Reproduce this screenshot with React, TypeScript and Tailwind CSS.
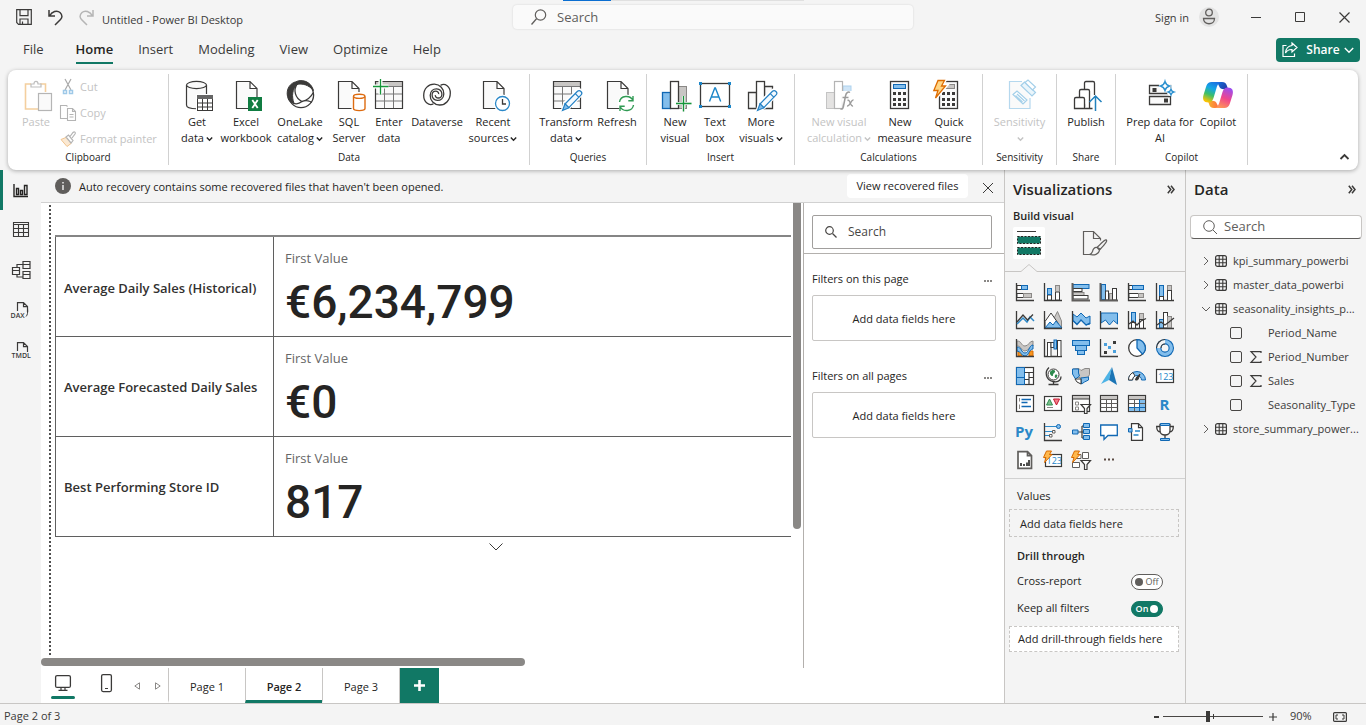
import React from "react";
import type { ReactNode } from "react";

const INK = "#3b3a39";
const BLUE = "#1068b4";
const SKY = "#83beec";
const GREY = "#c8c6c4";

/* ---------- shared pieces ---------- */

type SvgProps = { w?: number; h?: number; children?: ReactNode; className?: string };

function Svg({ w = 32, h = w, children, className = "" }: SvgProps) {
  return (
    <svg
      width={w}
      height={h}
      viewBox={`0 0 ${w} ${h}`}
      fill="none"
      stroke={INK}
      className={`shrink-0 overflow-visible ${className}`}
      aria-hidden="true"
    >
      {children}
    </svg>
  );
}

function Caret() {
  return (
    <svg width="7" height="6" viewBox="0 0 7 6" fill="none" stroke="currentColor" strokeWidth="1.4" className="ml-0.5 inline-block" aria-hidden="true">
      <path d="M.8 1.500 3.500 4.200 6.200 1.500" />
    </svg>
  );
}

/* ---------- ribbon icons (32 x 32) ---------- */

const page = (x: number) => (
  <path d={`M${x} 1.5h13.5l7 7v20H${x}z M${x + 13.5} 1.5v7h7`} fill="#fafafa" strokeWidth="1.2" />
);

const pencil = (
  <g stroke="#2380c4" strokeWidth="1.2">
    <path d="M12.5 30.5 15 23 27.5 10.8c2.2-2 5.8 1.2 3.8 3.6L19 27.5z" fill="#fff" stroke="#fff" strokeWidth="3.5" />
    <path d="M15 24 27.5 11.3c2.2-2 5.8 1.2 3.6 3.6L18.8 27.6z" fill="#f4faff" />
    <path d="M12.5 30.5 15 23.8l3.9 3.9z" fill={SKY} />
    <path d="m25.3 13.6 3.7 3.8" />
  </g>
);

const calculator = (screen: string, edge: string) => (
  <g>
    <rect x="6.5" y="1.5" width="18" height="27" fill="#fafafa" strokeWidth="1.3" />
    <rect x="9.5" y="4.5" width="12" height="4" fill={screen} stroke={edge} />
    {[12, 18, 23].map((y) =>
      [9, 14, 19].map((x) => <rect key={`${x}-${y}`} x={x} y={y} width="3" height="3" fill={INK} stroke="none" />),
    )}
  </g>
);

const bolt = "M5 .5h6.5L8.5 6h4L2.5 18 5 10.5H.8z";

const IconPaste = () => (
  <Svg>
    <path d="M11 4H5.5v25H18 M20 4h5.5v8" stroke="#f4cf9f" strokeWidth="1.6" />
    <path d="M11 7V4h3c0-3.6 4-3.6 4 0h3v3z" stroke="#bdbdbd" fill="#fff" strokeWidth="1.2" />
    <rect x="18.5" y="13.5" width="13" height="17" stroke="#b5b5b5" fill="#fafafa" strokeWidth="1.2" />
  </Svg>
);
const IconGet = () => (
  <Svg>
    <path d="M5.5 5v20c0 5 20 5 20 0V5" fill="#fafafa" strokeWidth="1.2" />
    <ellipse cx="15.5" cy="5" rx="10" ry="3.6" fill="#fafafa" strokeWidth="1.2" />
    <path d="M15 14h18v18H15z" fill="#fff" stroke="none" />
    <rect x="16.5" y="15.5" width="15" height="15" fill="#fff" />
    <path d="M16 15h16v4H16z" fill="#666" stroke="none" />
    <path d="M16.5 23h15M16.5 27h15M21.5 19v11.5M26.5 19v11.5" />
  </Svg>
);
const IconExcel = () => (
  <Svg>
    {page(6.5)}
    <rect x="18" y="17" width="14" height="14" fill="#107c41" stroke="none" />
    <path d="m22.3 20 5.4 8m0-8-5.4 8" stroke="#fff" strokeWidth="1.8" />
  </Svg>
);
const IconOneLake = () => (
  <Svg>
    <circle cx="17" cy="15" r="12.6" fill="#fff" strokeWidth="1.3" />
    <path d="M11 2C4 4.500 1.500 12 4.300 19c1.800 3.500 3.600 3.800 5.700 4.400C7.500 16.500 8 9 13.500 4z" fill={INK} />
    <path d="M11 2.300C17-1.500 27 1 29.500 10.500 25 5 18 3 13 4.500z" fill={INK} />
    <path d="M13.200 4C9 10 11 18 18 21.500c5-1.200 8.800-4 11.300-9M9 23c3 1.500 6.500.5 9-1.500 4-1.800 9-.5 9.500 1.200" strokeWidth="1.300" />
  </Svg>
);
const IconSql = () => (
  <Svg>
    {page(5.5)}
    <path d="M18.5 12h15v20h-15z" fill="#fff" stroke="none" />
    <path d="M20.5 16.5v12c0 2.8 11.5 2.8 11.5 0v-12" stroke="#dd6b10" fill="#fff" strokeWidth="1.4" />
    <ellipse cx="26.2" cy="16.3" rx="5.7" ry="2.1" stroke="#dd6b10" fill="#fff" strokeWidth="1.4" />
  </Svg>
);
const IconEnter = () => (
  <Svg>
    <rect x="2.5" y="1.5" width="27" height="27" fill="#fafafa" />
    <path d="M3 2h26v4H3z" fill={GREY} stroke="none" />
    <path d="M2.5 6.5h27M2.5 14h27M2.5 21h27M11.5 6.5v22M20.5 6.5v22" stroke="#777" />
    <path d="M2.5 1.5h27v27h-27z" strokeWidth="1.2" />
    <path d="M7.5-1v15.5M0 6.5h15.5" stroke="#fff" strokeWidth="4" />
    <path d="M7.5-1v15.5M0 6.5h15.5" stroke="#16963a" strokeWidth="1.3" />
  </Svg>
);
const IconDataverse = () => (
  <Svg>
    <path d="M12.5 23.8C8 26.5 2.7 22 2.7 15.5 2.7 8.5 7.5 4 13.5 4.2c5.5.2 9.5 4.500 9.300 9.800-.2 4-3 6.500-6.500 6.400-3.200-.1-5.300-2.500-5.200-5.400.1-2.300 1.700-3.800 3.700-3.800 1.600 0 3 1.200 2.900 2.900" strokeWidth="1.3" />
    <path d="M19.500 5.400c4.500-2.700 9.800 1.100 9.800 7.600 0 7-4.800 12.200-10.800 12-5.500-.2-9.500-4.500-9.300-9.800.2-4 3-6.500 6.500-6.400 3.200.1 5.300 2.500 5.200 5.400-.1 2.300-1.700 3.800-3.700 3.800-1.600 0-3-1.200-2.900-2.900" strokeWidth="1.3" />
  </Svg>
);
const IconRecent = () => (
  <Svg>
    {page(6.5)}
    <circle cx="25.5" cy="23.5" r="9" fill="#fff" stroke="none" />
    <circle cx="25.5" cy="23.5" r="7" fill="#fff" stroke="#2b88c8" strokeWidth="1.3" />
    <path d="M25.5 19v5h3.5" strokeWidth="1.3" />
  </Svg>
);
const IconTransform = () => (
  <Svg>
    <rect x="3.5" y="1.5" width="27" height="27" fill="#fafafa" />
    <path d="M4 2h26v4H4z" fill={GREY} stroke="none" />
    <path d="M3.5 6.5h27M3.5 14h27M3.5 21h27M12.5 6.5v22M21.5 6.5v22" stroke="#777" />
    <path d="M3.5 1.5h27v27h-27z" strokeWidth="1.2" />
    {pencil}
  </Svg>
);
const IconRefresh = () => (
  <Svg>
    {page(6.5)}
    <circle cx="25.5" cy="23.5" r="9" fill="#fff" stroke="none" />
    <path d="M18.5 22c1-6.5 10.5-7.5 13.5-1.5m0-4.5v4.7h-4.7M32.5 25c-1 6.5-10.5 7.5-13.5 1.5m0 4.5v-4.7h4.7" stroke="#2f9a53" strokeWidth="1.4" />
  </Svg>
);
const IconNewVisual = () => (
  <Svg>
    <rect x="3.5" y="12.5" width="8" height="16" fill={SKY} stroke={BLUE} strokeWidth="1.3" />
    <rect x="19.5" y="6.5" width="8" height="22" fill={GREY} stroke="#8a8886" />
    <rect x="11.5" y="1.5" width="8" height="27" fill="#fff" strokeWidth="1.3" />
    <path d="M24.500 16v15.500M17 23.5h15.500" stroke="#f4f4f4" strokeWidth="3" />
    <path d="M24.500 16v15.500M17 23.5h15.500" stroke="#16963a" strokeWidth="1.3" />
  </Svg>
);
const IconTextBox = () => (
  <Svg>
    <rect x="1.5" y="3.5" width="29" height="23" fill="#fff" strokeWidth="1.3" />
    <path d="m10.5 21.5 5.300-13.500h.6l5.300 13.500M12.5 17h7.200" stroke="#1b86c9" strokeWidth="1.4" />
    {[0, 29].map((x) => [2, 25].map((y) => <rect key={`${x}${y}`} x={x} y={y} width="3" height="3" fill="#1b86c9" stroke="none" />))}
  </Svg>
);
const IconMoreVisuals = () => (
  <Svg>
    <path d="M3.5 12.5h8v16h-8zM19.5 6.5h8v22h-8z" fill="#fafafa" strokeWidth="1.3" />
    <rect x="11.5" y="1.5" width="8" height="27" fill="#fff" strokeWidth="1.3" />
    {pencil}
  </Svg>
);
const IconVisualCalc = () => (
  <Svg>
    <rect x="3.5" y="12.5" width="8" height="16" fill="#e4e3e2" stroke="#c4c4c4" />
    <rect x="20" y="6" width="8" height="7" fill="#cfe5f7" stroke="#add2ee" />
    <rect x="11.5" y="1.5" width="8" height="27" fill="#fff" stroke="#b4b4b4" strokeWidth="1.2" />
    <path d="M18 11h14v20H20z" fill="#fff" stroke="none" />
    <path d="M27 12.500c-2-1.400-4 .5-4.500 3.500l-2.200 11c-.3 1.800-1.500 2.500-2.800 1.800M19.500 17.500h6" stroke="#9b9b9b" strokeWidth="1.5" />
    <path d="M24.5 20.5c3-1.500 2.500 6.500 5.500 5.500M30.500 20c-2.500-.5-3.500 6.500-6.500 6" stroke="#9b9b9b" strokeWidth="1.4" />
  </Svg>
);
const IconMeasure = () => <Svg>{calculator(SKY, BLUE)}</Svg>;
const IconQuick = () => (
  <Svg>
    {calculator(GREY, "#8a8886")}
    <path d={bolt} fill="#fff" stroke="#fff" strokeWidth="4" />
    <path d={bolt} fill="#ffd686" stroke="#de6c00" strokeWidth="1.3" />
  </Svg>
);
const IconSensitivity = () => (
  <Svg>
    <path d="M18 1.500H5.500v27h20.500V18" fill="#fafafa" stroke="#b5d8ee" strokeWidth="1.2" />
    <g stroke="#a3cfe9" strokeWidth="1.2" fill="#fff">
      <path d="m9 14.500 4-3.500L23 20l-4 4z" />
      <path d="m11.500 15.500 7 6.500m-5.500-8 7.500 7" />
      <path d="m17 5.500 3.500-3.500 4 4 3 2.500 4 4-3.500 3.500z" fill="#eaf5fb" />
      <path d="m21 2.500 3-2.500L31.500 7l-3 3z" />
    </g>
  </Svg>
);
const IconPublish = () => (
  <Svg>
    <path d="M14.5 27V3c0-1 .5-1.500 1.500-1.500h7c1 0 1.500.5 1.500 1.500v12" strokeWidth="1.3" />
    <path d="M9.5 17v-6c0-1 .5-1.500 1.500-1.500h7c1 0 1.500.5 1.500 1.500v17.500" fill="#fff" strokeWidth="1.3" />
    <path d="M4.5 28.5V19c0-1 .5-1.500 1.500-1.500h7c1 0 1.500.5 1.500 1.500v9.500zM14.5 28.5h8" fill="#fff" strokeWidth="1.3" />
    <path d="M25.5 31V17" stroke="#fff" strokeWidth="4" />
    <path d="M25.5 31V16m-6 6 6-6 6 6" stroke="#2181bd" strokeWidth="1.5" />
  </Svg>
);
const IconPrep = () => (
  <Svg>
    <path d="M5.5 5.5h21v8h-21zM5.5 16.5h21v8h-21z" fill="#fafafa" strokeWidth="1.3" />
    <path d="M8.500 8h4v4h-4zM20 18.500h4v4h-4z" fill={INK} stroke="none" />
    <circle cx="21" cy="6" r="6" fill="#fff" stroke="none" />
    <circle cx="27" cy="12" r="4" fill="#fff" stroke="none" />
    <path d="M21 1.500c.8 2.900 1.700 3.700 4.500 4.500-2.800.8-3.700 1.700-4.500 4.500-.8-2.800-1.700-3.700-4.500-4.500 2.800-.8 3.700-1.600 4.500-4.500zM27 9.300c.5 1.800 1 2.200 2.700 2.700-1.700.5-2.200 1-2.700 2.700-.5-1.700-1-2.200-2.700-2.700 1.700-.5 2.200-.9 2.700-2.700z" stroke="#2b90cf" fill="#fff" strokeWidth="1.4" />
  </Svg>
);
const IconCopilot = () => (
  <Svg>
    <defs>
      <linearGradient id="cp-left" x1="0.7" y1="0" x2="0.3" y2="1">
        <stop offset="0" stopColor="#1b6fe0" />
        <stop offset="0.35" stopColor="#14a6e6" />
        <stop offset="0.65" stopColor="#3cbf6a" />
        <stop offset="1" stopColor="#ffc400" />
      </linearGradient>
      <linearGradient id="cp-right" x1="0.7" y1="0" x2="0.3" y2="1">
        <stop offset="0" stopColor="#9b4df0" />
        <stop offset="0.5" stopColor="#f0468c" />
        <stop offset="1" stopColor="#ff9a55" />
      </linearGradient>
      <linearGradient id="cp-top" x1="0" y1="0" x2="1" y2="0.5">
        <stop offset="0" stopColor="#1270dd" />
        <stop offset="1" stopColor="#2140a8" />
      </linearGradient>
      <linearGradient id="cp-bottom" x1="0" y1="0.5" x2="1" y2="0.5">
        <stop offset="0" stopColor="#f7b32b" />
        <stop offset="1" stopColor="#ff6a45" />
      </linearGradient>
    </defs>
    <g stroke="none">
      <path d="M15 2h5c3 0 4.200 1.400 5 4l1 3.200h-4c-3 0-4-.8-5-3.200z" fill="url(#cp-top)" />
      <path d="M17 28h-5c-3 0-4.200-1.400-5-4l-1-3.200h4c3 0 4 .8 5 3.200z" fill="url(#cp-bottom)" />
      <path d="M9.5 2H20c-3.200 0-4.500 2.700-5.500 6l-3 10c-1 3-2.500 4.500-5 4.500-5 0-6.200-3-5-7.500L4.300 6C5.200 3.300 7 2 9.500 2z" fill="url(#cp-left)" />
      <path d="M22.5 28H12c3.200 0 4.500-2.700 5.500-6l3-10c1-3 2.500-4.500 5-4.500 5 0 6.200 3 5 7.500L27.700 24c-.9 2.700-2.700 4-5.200 4z" fill="url(#cp-right)" />
    </g>
  </Svg>
);

/* ---------- ribbon ---------- */

type ToolProps = { icon: ReactNode; lines: string[]; width: string; caret?: boolean; off?: boolean };

function Tool({ icon, lines, width, caret, off }: ToolProps) {
  const last = lines.length - 1;
  return (
    <button type="button" disabled={off} className={`flex shrink-0 flex-col items-center gap-0.5 pt-1.5 text-[11px] leading-4 whitespace-nowrap ${width} ${off ? "text-[#c3c3c3]" : "text-[#252423]"}`}>
      {icon}
      <span className="flex flex-col items-center">
        {lines.map((line, i) => (
          <span key={i} className="block min-h-4">
            {line}
            {caret && i === last && <Caret />}
          </span>
        ))}
      </span>
    </button>
  );
}

function Group({ label, width, pad = "", children }: { label: string; width: string; pad?: string; children: ReactNode }) {
  return (
    <section aria-label={label} className={`flex shrink-0 flex-col justify-between border-r border-[#d1d1d1] ${width}`}>
      <div className={`flex items-start ${pad}`}>{children}</div>
      <div className="text-center text-[10px] leading-4 text-[#252423]">{label}</div>
    </section>
  );
}

function Ribbon() {
  const small = "flex h-5 items-center gap-1 text-[11px] text-[#c3c3c3]";
  return (
    <div className="relative z-10 mx-2 flex h-[100px] shrink-0 rounded-lg bg-white pt-1 pb-[5px] shadow-[0_1px_4px_rgba(0,0,0,0.3)]">
      <Group label="Clipboard" width="w-[161px]" pad="pl-2">
        <Tool icon={<IconPaste />} lines={["Paste"]} width="w-10" off />
        <div className="flex flex-col gap-1.5 pt-[3px] pl-1">
          <button type="button" disabled className={small}>
            <Svg w={16}>
              <path d="M5 0l6 11M11 0 5 11" stroke="#aaa" strokeWidth="1.2" />
              <rect x="3.5" y="11.5" width="3" height="3" stroke="#9fc9e8" strokeWidth="1.5" />
              <rect x="9.5" y="11.5" width="3" height="3" stroke="#9fc9e8" strokeWidth="1.5" />
            </Svg>
            Cut
          </button>
          <button type="button" disabled className={small}>
            <Svg w={16}>
              <path d="M7 13.5H.5V.5h6l1 1M7.5 3.5h5l3 3v9h-8zM12.5 3.5v3h3M9.5 9.5h4M9.5 12h4" stroke="#b4b4b4" strokeWidth="1.1" />
            </Svg>
            Copy
          </button>
          <button type="button" disabled className={small}>
            <Svg w={16}>
              <path d="M1 8.5 7 6l4 6.5-4 3z" fill="#fbe9d3" stroke="#f1c48f" />
              <path d="m6 6 2.5-2 4.500 5.500-2 2.500zM10 5.500 13 1.500c1.500-1.500 3 0 2 1.500L12 7" stroke="#b4b4b4" fill="#fff" strokeWidth="1.2" />
            </Svg>
            Format painter
          </button>
        </div>
      </Group>
      <Group label="Data" width="w-[361px]" pad="pl-1">
        <Tool icon={<IconGet />} lines={["Get", "data"]} width="w-[48px]" caret />
        <Tool icon={<IconExcel />} lines={["Excel", "workbook"]} width="w-[50px]" />
        <Tool icon={<IconOneLake />} lines={["OneLake", "catalog"]} width="w-[58px]" caret />
        <Tool icon={<IconSql />} lines={["SQL", "Server"]} width="w-10" />
        <Tool icon={<IconEnter />} lines={["Enter", "data"]} width="w-10" />
        <Tool icon={<IconDataverse />} lines={["Dataverse"]} width="w-[56px]" />
        <Tool icon={<IconRecent />} lines={["Recent", "sources"]} width="w-[56px]" caret />
      </Group>
      <Group label="Queries" width="w-[117px]" pad="pl-2">
        <Tool icon={<IconTransform />} lines={["Transform", "data"]} width="w-[56px]" caret />
        <Tool icon={<IconRefresh />} lines={["Refresh"]} width="w-[46px]" />
      </Group>
      <Group label="Insert" width="w-[148px]" pad="pl-2">
        <Tool icon={<IconNewVisual />} lines={["New", "visual"]} width="w-10" />
        <Tool icon={<IconTextBox />} lines={["Text", "box"]} width="w-10" />
        <Tool icon={<IconMoreVisuals />} lines={["More", "visuals"]} width="w-[52px]" caret />
      </Group>
      <Group label="Calculations" width="w-[188px]" pad="pl-2">
        <Tool icon={<IconVisualCalc />} lines={["New visual", "calculation"]} width="w-[72px]" caret off />
        <Tool icon={<IconMeasure />} lines={["New", "measure"]} width="w-[50px]" />
        <Tool icon={<IconQuick />} lines={["Quick", "measure"]} width="w-[48px]" />
      </Group>
      <Group label="Sensitivity" width="w-[74px]">
        <Tool icon={<IconSensitivity />} lines={["Sensitivity", ""]} width="w-full" caret off />
      </Group>
      <Group label="Share" width="w-[59px]">
        <Tool icon={<IconPublish />} lines={["Publish"]} width="w-full" />
      </Group>
      <Group label="Copilot" width="w-[132px]" pad="pl-2">
        <Tool icon={<IconPrep />} lines={["Prep data for", "AI"]} width="w-[72px]" />
        <Tool icon={<IconCopilot />} lines={["Copilot"]} width="w-[44px]" />
      </Group>
      <button type="button" aria-label="Collapse ribbon" className="mr-2 ml-auto self-end pb-1">
        <Svg w={11} h={8}>
          <path d="m1.5 6 4-4 4 4" strokeWidth="1.8" />
        </Svg>
      </button>
    </div>
  );
}

/* ---------- title bar and menu ---------- */

function TitleBar() {
  return (
    <header className="relative flex h-[34px] shrink-0 items-center">
      <div className="absolute top-0 left-[563px] flex h-px">
        <span className="h-px w-12 bg-[#0a6ed1]" />
        <span className="h-px w-[193px] bg-[#e0e0e0]" />
      </div>
      <div className="flex flex-[513] items-center">
        <button type="button" aria-label="Save" className="ml-4">
          <Svg w={16}>
            <path d="M.7.7h14.600v14.600H2.500L.7 13.500zM4 .7v6h8v-6M4 15v-5h8v5M6.500 15v-2.500" strokeWidth="1.2" />
          </Svg>
        </button>
        <button type="button" aria-label="Undo" className="ml-4">
          <Svg w={15}>
            <path d="M1 0v6h6M1.500 6C4 1.500 9-.2 12 2.500c3 2.800 2 5.500.5 7L7 15" strokeWidth="1.5" />
          </Svg>
        </button>
        <button type="button" aria-label="Redo" disabled className="ml-4">
          <Svg w={15}>
            <path d="M14 0v6H8M13.500 6C11 1.500 6-.2 3 2.500c-3 2.800-2 5.500-.5 7L8 15" stroke="#b5b5b5" strokeWidth="1.5" />
          </Svg>
        </button>
        <span className="mt-1.5 ml-2 text-[11px] leading-4 text-[#3b3a39]">Untitled - Power BI Desktop</span>
      </div>
      <label className="flex h-6 w-[400px] items-center rounded-sm bg-[#fafafa] pl-[18px] shadow-[0_0_2px_rgba(0,0,0,0.15)]">
        <Svg w={16}>
          <circle cx="9.5" cy="6" r="5.2" stroke="#605e5c" strokeWidth="1.2" />
          <path d="M5.5 9.8.5 15.5" stroke="#605e5c" strokeWidth="1.3" />
        </Svg>
        <input type="search" aria-label="Search commands" placeholder="Search" className="ml-2.5 min-w-0 flex-1 bg-transparent text-[13px] leading-5 outline-none placeholder:text-[#605e5c]" />
      </label>
      <div className="flex flex-[453] items-center justify-end">
        <button type="button" className="pt-0.5 text-[11px] text-[#3b3a39]">Sign in</button>
        <button type="button" aria-label="Account" className="ml-2.5 flex size-5 items-center justify-center rounded-full bg-[#e3e3e3]">
          <Svg w={14} h={18}>
            <circle cx="7" cy="4.5" r="3.3" stroke="#605e5c" strokeWidth="1.3" />
            <path d="M1.5 10.5h11c0 7-11 7-11 0z" stroke="#605e5c" strokeWidth="1.3" />
          </Svg>
        </button>
        <button type="button" aria-label="Minimize" className="ml-8">
          <Svg w={10}><path d="M0 5.5h10" /></Svg>
        </button>
        <button type="button" aria-label="Maximize" className="ml-[34px]">
          <Svg w={10}><path d="M.5.5h9v9h-9z" /></Svg>
        </button>
        <button type="button" aria-label="Close" className="mr-4 ml-[34px]">
          <Svg w={11}><path d="m.5.5 10 10m0-10-10 10" strokeWidth="1.2" /></Svg>
        </button>
      </div>
    </header>
  );
}

function MenuBar() {
  const items = ["File", "Home", "Insert", "Modeling", "View", "Optimize", "Help"];
  return (
    <nav className="flex h-9 shrink-0 items-start">
      <div className="flex gap-[25px] pl-[23px]">
        {items.map((item) => (
          <button
            key={item}
            type="button"
            className={`h-[30px] border-b-2 pt-1 text-[13px] ${item === "Home" ? "ml-[7px] border-[#117865] font-semibold text-[#252423]" : "border-transparent text-[#3b3a39]"}`}
          >
            {item}
          </button>
        ))}
      </div>
      <button type="button" className="mt-1 mr-1.5 ml-auto flex h-6 w-[84px] items-center justify-center rounded bg-[#117865] text-[12px] font-semibold text-white">
        <Svg w={16} className="mr-2">
          <path d="M4.5 3.500H1v11h11.500v-3" stroke="#fff" strokeWidth="1.2" />
          <path d="M10 1l5 4.500-5 4.500V7.500C7 7.300 5 8.500 3.500 11c.3-4 2.500-7 6.500-7.500z" stroke="#fff" strokeWidth="1.2" />
        </Svg>
        Share
        <Svg w={10} h={7} className="ml-1">
          <path d="m.8 1 4.200 4.200L9.200 1" stroke="#fff" strokeWidth="1.4" />
        </Svg>
      </button>
    </nav>
  );
}

/* ---------- left rail ---------- */

const railDoc = <path d="M4.500 9V.6h6l4 4V10M10.500.6v4h4" strokeWidth="1.2" />;

function Rail() {
  const views: { name: string; icon: ReactNode }[] = [
    { name: "Report view", icon: <path d="M1 2v12.500h14M3.500 6.500h2v6h-2zM7.500 8.500h2v4h-2zM11.500 3.500h2.500v9h-2.500z" strokeWidth="1.4" stroke="#252423" /> },
    { name: "Table view", icon: <path d="M.5.5h15v14H.5zM.5 2.500h15M.5 6.500h15M.5 10.500h15M5.500 2.500v12M10.500 2.500v12" strokeWidth="1.1" /> },
    { name: "Model view", icon: <path d="M-.5 5.500h7v7h-7zM-.5 8.500h7M10-.5h7v7h-7zM10 2.500h7M10 9.500h7v7h-7zM10 12.500h7M4 5.500v-3h6M4 12.500V15h6" strokeWidth="1.2" /> },
    { name: "DAX query view", icon: <g>{railDoc}<text x="-2.500" y="15.500" fontSize="7" stroke="none" fill={INK} fontFamily="Open Sans, sans-serif" fontWeight="600">DAX</text><path d="M13 14.500c1.500-1.500 2-4 1.500-8.500" /></g> },
    { name: "TMDL view", icon: <g>{railDoc}<text x="-1.500" y="15.500" fontSize="7" stroke="none" fill={INK} fontFamily="Open Sans, sans-serif" fontWeight="600">TMDL</text></g> },
  ];
  return (
    <nav aria-label="Views" className="flex w-[41px] shrink-0 flex-col">
      {views.map((v, i) => (
        <button key={v.name} type="button" aria-label={v.name} className={`flex h-10 items-center border-l-[3px] pl-2.5 ${i === 0 ? "border-[#117865]" : "border-transparent"}`}>
          <Svg w={16}>{v.icon}</Svg>
        </button>
      ))}
    </nav>
  );
}

/* ---------- report canvas ---------- */

const kpis = [
  { name: "Average Daily Sales (Historical)", value: "€6,234,799" },
  { name: "Average Forecasted Daily Sales", value: "€0" },
  { name: "Best Performing Store ID", value: "817" },
];

function Canvas() {
  return (
    <div className="flex min-w-0 flex-1 flex-col bg-white">
      <div className="flex min-h-0 flex-1">
        <div className="mt-0.5 ml-2 w-1.5 shrink-0 border-l-2 border-dotted border-[#4f4f4f]" />
        <div className="flex min-w-0 flex-1 flex-col items-center pt-8">
          <table className="w-full border-collapse">
            <tbody>
              {kpis.map((k) => (
                <tr key={k.name} className="h-[100px] border-y border-[#5f5f5f] first:border-t-2 first:border-t-[#858585]">
                  <th scope="row" className="w-[218px] border-x border-[#5f5f5f] pt-1 pl-2 text-left text-[13px] font-semibold whitespace-nowrap text-[#323130]">
                    {k.name}
                  </th>
                  <td className="pl-[11px] align-top">
                    <div className="pt-[11px] text-[13px] leading-5 text-[#666]">First Value</div>
                    <div className="pt-2.5 font-['Roboto'] text-[46px] leading-[48px] font-medium text-[#252423]">{k.value}</div>
                  </td>
                </tr>
              ))}
            </tbody>
          </table>
          <button type="button" aria-label="Scroll down" className="mt-1.5 ml-[146px]">
            <Svg w={14} h={8}><path d="m.5.5 6.500 6.500L13.500.5" /></Svg>
          </button>
        </div>
        <div className="w-3 shrink-0">
          <div className="mx-0.5 h-[326px] rounded-b bg-[#8a8886]" />
        </div>
      </div>
      <div className="flex h-[13px] shrink-0 items-center">
        <div className="h-2 w-[484px] rounded bg-[#8a8886]" />
      </div>
    </div>
  );
}

function FilterPane() {
  return (
    <aside aria-label="Filters" className="w-[201px] shrink-0 border-l border-[#b3b0ad] bg-white text-[11px] text-[#252423]">
      <div className="border-b border-[#b3b0ad] pt-3 pr-3 pb-1 pl-2">
        <label className="flex h-[34px] items-center rounded-xs border border-[#a19f9d] pl-3">
          <Svg w={12}>
            <circle cx="4.5" cy="4.5" r="3.8" stroke="#484644" strokeWidth="1.2" />
            <path d="m7.5 7.5 4 4" stroke="#484644" strokeWidth="1.3" />
          </Svg>
          <input type="search" aria-label="Search filters" placeholder="Search" className="ml-[11px] min-w-0 flex-1 bg-transparent text-[12px] outline-none placeholder:text-[#484644]" />
        </label>
      </div>
      {["Filters on this page", "Filters on all pages"].map((t, i) => (
        <section key={t} className={`px-2 ${i === 0 ? "pt-4" : "pt-[26px]"}`}>
          <div className="flex h-[17px] items-center justify-between pt-0.5">
            <h3>{t}</h3>
            <button type="button" aria-label={`${t} options`} className="mr-1 flex gap-px pt-0.5">
              {[0, 1, 2].map((d) => <span key={d} className="size-0.5 bg-[#8a8886]" />)}
            </button>
          </div>
          <div className="mt-2 flex h-[46px] items-center justify-center rounded-xs border border-[#c8c6c4] pt-0.5">Add data fields here</div>
        </section>
      ))}
    </aside>
  );
}

function InfoBar() {
  return (
    <div className="flex h-[33px] shrink-0 items-center border-b border-[#d1d1d1] text-[11px] text-[#252423]">
      <Svg w={16} className="ml-3.5">
        <circle cx="8" cy="8" r="8" fill="#605e5c" stroke="none" />
        <path d="M8 7v5M8 4v1.500" stroke="#fff" strokeWidth="1.3" />
      </Svg>
      <p className="ml-2 pt-0.5">Auto recovery contains some recovered files that haven't been opened.</p>
      <button type="button" className="ml-auto h-6 w-[121px] rounded bg-white pt-px">View recovered files</button>
      <button type="button" aria-label="Dismiss" className="mr-[11px] ml-[15px] pt-1">
        <Svg w={10}><path d="m0 0 10 10M10 0 0 10" /></Svg>
      </button>
    </div>
  );
}

function PageTabs() {
  return (
    <div className="flex h-[35px] shrink-0 bg-white text-[11px] text-[#252423]">
      <div className="flex w-[127px] shrink-0">
        <button type="button" aria-label="Desktop layout" className="ml-2.5 flex w-6 flex-col items-center pt-[7px]">
          <Svg w={16} h={16}>
            <rect x=".6" y=".6" width="14.8" height="11.8" rx="1.5" strokeWidth="1.3" />
            <path d="M6 12.500v2.500M10 12.500v2.500M3.500 15.300h9" strokeWidth="1.2" />
          </Svg>
          <span className="mt-[5px] h-[3px] w-6 rounded bg-[#117865]" />
        </button>
        <button type="button" aria-label="Mobile layout" className="ml-[26px] self-start pt-1.5">
          <Svg w={11} h={19}>
            <rect x=".6" y=".6" width="9.8" height="17" rx="1.5" strokeWidth="1.3" />
            <path d="M4 14.500h3" />
          </Svg>
        </button>
        <button type="button" aria-label="Previous page" className="ml-[22px] self-center">
          <Svg w={6} h={8}><path d="M5.500.8v6.400L.8 4z" stroke="#8a8886" /></Svg>
        </button>
        <button type="button" aria-label="Next page" className="ml-[15px] self-center">
          <Svg w={6} h={8}><path d="M.5.8v6.400L5.200 4z" stroke="#8a8886" /></Svg>
        </button>
      </div>
      {["Page 1", "Page 2", "Page 3"].map((p) => (
        <button
          key={p}
          type="button"
          className={`w-[77px] border-b-[3px] border-l border-l-[#c8c6c4] pt-1.5 ${p === "Page 2" ? "border-b-[#117865] font-semibold" : "border-b-transparent"}`}
        >
          {p}
        </button>
      ))}
      <button type="button" aria-label="New page" className="flex w-10 items-center justify-center border-l border-[#c8c6c4] bg-[#117865]">
        <Svg w={11}><path d="M5.500 0v11M0 5.500h11" stroke="#fff" strokeWidth="2.6" /></Svg>
      </button>
    </div>
  );
}

/* ---------- visualizations pane ---------- */

const axis = <path d="M.5 0v17.500H18" strokeWidth="1.3" />;
const b = { fill: SKY, stroke: BLUE };
const g = { fill: GREY, stroke: "#8a8886" };
const w = { fill: "#fff", stroke: INK };

const visuals: { name: string; art: ReactNode }[] = [
  { name: "Stacked bar chart", art: <>{axis}<rect x="1" y="2.500" width="5" height="4" {...w} /><rect x="5.500" y="2.500" width="6" height="4" {...b} /><rect x="1" y="10.500" width="7" height="4" {...w} /><rect x="7.500" y="10.500" width="8" height="4" {...g} /></> },
  { name: "Stacked column chart", art: <>{axis}<rect x="3.5" y="12" width="4" height="5" {...w} /><rect x="3.5" y="5.500" width="4" height="6" {...b} /><rect x="11.5" y="9" width="4" height="8" {...w} /><rect x="11.5" y="2.500" width="4" height="6" {...g} /></> },
  { name: "Clustered bar chart", art: <><rect x="1" y="1.5" width="16" height="4" {...b} /><rect x="1" y="5.5" width="9" height="3" {...w} /><rect x="1" y="9.500" width="11" height="3" {...g} /><rect x="1" y="12.500" width="15" height="3.500" {...w} /><path d="M.5 0v17.500H18" strokeWidth="2" stroke="#605e5c" /></> },
  { name: "Clustered column chart", art: <><rect x="1.5" y="1.500" width="4" height="15" {...b} /><rect x="5.5" y="8" width="3" height="9" {...w} /><rect x="9.500" y="10.5" width="3" height="6.5" {...g} /><rect x="12.500" y="5.5" width="4" height="11.5" {...w} /><path d="M.5 0v17.500H18" strokeWidth="2" stroke="#605e5c" /></> },
  { name: "100% stacked bar chart", art: <>{axis}<rect x="1" y="2.500" width="5" height="4" {...w} /><rect x="4.500" y="2.500" width="11" height="4" {...b} /><rect x="1" y="10.500" width="10" height="4" {...w} /><rect x="10.500" y="10.500" width="5" height="4" {...g} /></> },
  { name: "100% stacked column chart", art: <>{axis}<rect x="3.5" y="2.500" width="4" height="11" {...b} /><rect x="3.5" y="13.500" width="4" height="4" {...w} /><rect x="11.5" y="2.500" width="4" height="5" {...g} /><rect x="11.5" y="7.500" width="4" height="10" {...w} /></> },
  { name: "Line chart", art: <>{axis}<path d="m1 13 6-6 4 4 3-5 4 4" stroke="#2b88c8" strokeWidth="1.5" /><path d="m1 11 6-7 4.500 5L17 3.500" strokeWidth="1.3" /></> },
  { name: "Area chart", art: <><path d="M8.500 10 13.500.5l4 9.500v7H9z" {...g} /><path d="M1 17V10.500l6-8.500 7 10v5z" {...w} /><path d="m1 17 5-6 3 3 3-4 6 7z" {...b} />{axis}</> },
  { name: "Stacked area chart", art: <><path d="m1 3 4 3 4-4 5 5 4-2v8l-4 1-5-5-4 4-4-3z" {...b} />{axis}<path d="m1 9.500 4 4L9 9l5 5 4-2" stroke={BLUE} strokeWidth="1.3" /></> },
  { name: "100% stacked area chart", art: <><path d="M1 2h16.500v11l-4-3.500-4 4.500-4-5-4.500 3z" {...b} />{axis}</> },
  { name: "Line and stacked column chart", art: <><rect x="3.5" y="1.500" width="4" height="10" {...b} /><rect x="3.5" y="11.500" width="4" height="6" {...w} /><rect x="11.5" y="2.500" width="4" height="6" {...g} /><rect x="11.5" y="8.500" width="4" height="9" {...w} />{axis}<path d="m1 13 4-3 4 4 4-4 5-2.500" strokeWidth="1.3" /></> },
  { name: "Line and clustered column chart", art: <><rect x="3.500" y="8.5" width="4" height="8.5" {...b} /><rect x="7.500" y="1.5" width="4" height="15.5" {...w} /><rect x="11.500" y="5.5" width="4" height="11.5" {...g} />{axis}<path d="m1 14 4-3 4 3 4-3 5-4" strokeWidth="1.3" /></> },
  { name: "Ribbon chart", art: <><path d="M2 12h4v5H2zM13 12h4v5h-4z" fill="#f7941d" stroke="#d86a00" /><path d="M1 2c5 0 4 5 8 5s4-5 8-5v5c-4 0-4 5-8 5s-3-5-8-5z" {...g} /><path d="M1 8c5 0 4 6 8 6s4-8 8-8v4c-4 0-4 7-8 7s-4-5-8-5z" {...b} />{axis}</> },
  { name: "Waterfall chart", art: <>{axis}<rect x="3.5" y="3.5" width="3.5" height="14" {...w} /><rect x="7" y="3.5" width="3" height="5" {...w} /><rect x="10" y="1" width="2.5" height="9" {...b} /><rect x="13.5" y="1.5" width="3.5" height="16" {...w} /></> },
  { name: "Funnel chart", art: <><rect x=".5" y="1.5" width="17" height="5" {...b} /><rect x="3.5" y="6.5" width="11" height="5" {...b} /><rect x="5.500" y="11.5" width="7" height="4" {...b} /></> },
  { name: "Scatter chart", art: <>{axis}<g stroke="none"><path d="M4 4h3v3H4zM8 7h3v3H8zM13 11h3v3h-3z" fill="#4aa0dc" /><path d="M13 2h3v3h-3zM4 12h3v3H4z" fill={INK} /></g></> },
  { name: "Pie chart", art: <><circle cx="9" cy="9" r="8.3" fill="#fff" strokeWidth="1.3" /><path d="M9 .7A8.300 8.300 0 0 1 14.500 15.200L9 9z" {...b} strokeWidth="1.3" /></> },
  { name: "Donut chart", art: <><circle cx="9" cy="9" r="6.3" stroke={BLUE} strokeWidth="5.500" /><circle cx="9" cy="9" r="6.3" stroke={SKY} strokeWidth="3.300" /><path d="M2.700 9A6.300 6.300 0 0 1 9 2.700" stroke="#f4f4f4" strokeWidth="3.500" /><path d="M.5 9A8.500 8.500 0 0 1 9 .5M5 9a4 4 0 0 1 4-4" strokeWidth="1.1" /></> },
  { name: "Treemap", art: <><rect x=".5" y=".5" width="17" height="17" {...w} strokeWidth="1.2" /><path d="M.5.5h8v17h-8z" {...b} /><path d="M.5 10.500h8" stroke={BLUE} /><path d="M8.500 5.500h9M13 5.500v12M8.500 12.500H13M13 10.500h4.500" strokeWidth="1.2" /></> },
  { name: "Map", art: <><circle cx="9.5" cy="7.5" r="5.5" {...w} /><path d="M6 5c2-3 6-2 5 0s-2 1-2 3-2 1-3-1zM11 8c2-1 3 0 2 2s-3 1-2-2z" fill="#2e8b4f" stroke="none" /><path d="M5 .5C0 5 2 13 9 14.500s8-3 8-5M9.500 14.500v3M4.500 17.500h10" strokeWidth="1.3" /></> },
  { name: "Filled map", art: <><path d="M1 2l6-.5 2 2 4-2h4.500v6L15 12l-6-1-6-2z" {...g} /><path d="M.5 2h6v4l1 3-4 3-3-5z" {...b} /><path d="m9 11 7.500-1v3l-4 2-3 2z" {...b} /><path d="M3 12l2 3 4 2v-5z" {...w} /></> },
  { name: "Azure map", art: <g stroke="none"><path d="M12 0 1 17l8-4z" fill="#4db3e6" /><path d="M12 0 9 13l8 5z" fill="#1b75b5" /></g> },
  { name: "Gauge", art: <><path d="M.5 13a8.500 8.500 0 0 1 17 0h-4a4.500 4.500 0 0 0-9 0z" {...b} /><path d="M.5 13A8.500 8.500 0 0 1 5 5.500L7 9A4.500 4.500 0 0 0 4.500 13z" fill="#fff" /><path d="M7.500 13c0-2 2-4 4.500-6-1 3-1.500 5-2.500 6z" fill={INK} /></> },
  { name: "Card", art: <><rect x=".5" y="2.5" width="17" height="13" {...w} strokeWidth="1.2" /><text x="2" y="12.500" fontSize="9" fill="#1b86c9" stroke="none" fontFamily="Open Sans, sans-serif">123</text></> },
  { name: "Multi-row card", art: <><rect x=".5" y=".5" width="17" height="16" {...w} strokeWidth="1.2" /><path d="M3.500 3v3.500M3.500 9.500V14" stroke="#8a8886" /><path d="M5.500 4.500h9.500M5.500 7.500h6M5.500 11.500h9.500" stroke={BLUE} strokeWidth="1.3" /></> },
  { name: "KPI", art: <><rect x=".5" y="1.5" width="17" height="14" {...w} strokeWidth="1.2" /><path d="m5.500 4 3 6h-6z" fill="#7cc18c" stroke="#2e8b4f" /><path d="m12.500 10-3-6h6z" fill="#f0808a" stroke="#c5162e" /><path d="M3 12.500h6" stroke="#8a8886" /></> },
  { name: "Slicer", art: <><rect x=".5" y=".5" width="17" height="16" {...w} strokeWidth="1.2" /><path d="M1 1h16v3H1z" fill={GREY} stroke="none" /><path d="M.5 4h17" /><path d="M3.500 7h3v3h-3zM3.500 12h3v3h-3z" stroke="#8a8886" /><path d="M9 9.500h9.500l-3.500 4v5h-2.500v-5z" {...w} strokeWidth="1.2" /></> },
  { name: "Table", art: <><rect x=".5" y=".5" width="17" height="16" {...w} strokeWidth="1.2" /><path d="M1 1h16v3H1z" fill={GREY} stroke="none" /><path d="M.5 4.500h17M.5 8.500h17M.5 12.500h17M6.500 4.500v12M11.500 4.500v12" stroke="#605e5c" /></> },
  { name: "Matrix", art: <><rect x=".5" y=".5" width="17" height="16" {...w} strokeWidth="1.2" /><path d="M1 1h16v3H1z" fill={GREY} stroke="none" /><path d="M12 5h5v11H12zM1 13h11v3.500H1z" fill={SKY} stroke="none" /><path d="M.5 8.500h17M6.500 4.500v12M.5 4.500h17" stroke="#605e5c" /><path d="M.5 12.500h17M11.500 4.500v12" stroke={BLUE} /><path d="M.5.5h17v16H.5z" /></> },
  { name: "R script visual", art: <text x="3.500" y="14.5" fontSize="15" fill="#2b88c8" stroke="none" fontFamily="Open Sans, sans-serif" fontWeight="700">R</text> },
  { name: "Python visual", art: <text x="-1" y="14" fontSize="15" fill="#2b88c8" stroke="none" fontFamily="Open Sans, sans-serif" fontWeight="700">Py</text> },
  { name: "Key influencers", art: <>{axis}<path d="M1 3.500h12M1 8.500h8M1 12.500h5" stroke="#2b88c8" /><circle cx="14.5" cy="3.5" r="2" {...b} /><path d="M8.500 7.500H11V10H8.500zM5.500 11.500H8V14H5.500z" stroke="#605e5c" fill="#fff" /></> },
  { name: "Decomposition tree", art: <><path d="M6 9h4M10 3v12M10 3h2M10 9h2M10 15h2" strokeWidth="1.2" /><path d="M.5 7h5.500v4H.5zM11.500.5h6v4h-6zM11.500 6.500h6v4h-6zM11.500 12.500h6v4h-6z" {...b} /></> },
  { name: "Q&A", art: <path d="M.7 2h16.600v10.500H8L4 16.500v-4H.7z" fill="#fff" stroke={BLUE} strokeWidth="1.3" /> },
  { name: "Smart narrative", art: <><path d="M3.500.7h7l4 4v12.600h-11zM10.500.7v4h4" {...w} strokeWidth="1.2" /><path d="M.5 5.500H4V9H.5z" {...b} /><path d="M7 8h5M5.500 12h5" stroke="#2b88c8" strokeWidth="1.3" /></> },
  { name: "Metrics", art: <><path d="M4 1.500h10v6c0 6-10 6-10 0zM4 3.500H.7c0 4 1.500 5.500 4 5.500M14 3.500h3.300c0 4-1.500 5.500-4 5.500M9 12v4" {...w} strokeWidth="1.3" /><path d="M4.500.5h9v2h-9zM4.500 15.500h9v2h-9z" {...b} /></> },
  { name: "Paginated report", art: <><path d="M2 .7h9.500l4 4v12.600H2zM11.500.7v4h4" {...w} stroke="#605e5c" strokeWidth="1.7" /><path d="M5 12v3M8 13v2M11 11.500v3.500M13 9v6" strokeWidth="1.8" /></> },
  { name: "Card (new)", art: <><rect x="1.5" y="3.5" width="16" height="12" {...w} strokeWidth="1.2" /><text x="2.500" y="12.500" fontSize="9" fill="#1b86c9" stroke="none" fontFamily="Open Sans, sans-serif">123</text><path d="M2.500 0h5L5.500 3.500H8L.5 11.500l1.500-5h-2.500z" fill="#ffb84d" stroke="#d86a00" /></> },
  { name: "Slicer (new)", art: <><path d="M6 3.500h3v4H4M10.500 1.500h6v6h-6zM.5 11.500h7v5h-7z" stroke="#605e5c" fill="#fff" /><path d="M2.500 0h5L5.500 3.500H8L.5 11.500l1.500-5h-2.500z" fill="#ffb84d" stroke="#d86a00" /><path d="M9 9.500h9.500l-3.500 4v5h-2.500v-5z" {...w} strokeWidth="1.2" /></> },
  { name: "More visuals", art: <g stroke="none" fill="#5a4a42"><path d="M4 7.500h2v2H4zM8 7.500h2v2H8zM12 7.500h2v2h-2z" /></g> },
];

function Chevrons() {
  return (
    <Svg w={8} h={9}>
      <path d="m.8.8 3 3.700-3 3.700M4 .8l3 3.700L4 8.200" strokeWidth="1.5" />
    </Svg>
  );
}

function Toggle({ label, on }: { label: string; on?: boolean }) {
  return (
    <label className="flex h-[27px] items-center justify-between pr-[22px] pl-3">
      <span>{label}</span>
      <span className="relative flex h-4 w-8 items-center">
        <input type="checkbox" role="switch" defaultChecked={on} className="absolute inset-0 appearance-none rounded-full border border-[#605e5c] bg-white checked:border-[#117865] checked:bg-[#117865]" />
        <span className={`relative flex w-full items-center justify-center gap-0.5 text-[9px] leading-4 ${on ? "flex-row-reverse font-semibold text-white" : "text-[#605e5c]"}`}>
          <span className={`size-2 rounded-full ${on ? "bg-white" : "bg-[#605e5c]"}`} />
          {on ? "On" : "Off"}
        </span>
      </span>
    </label>
  );
}

function VisualizationsPane() {
  return (
    <aside aria-label="Visualizations" className="w-[181px] shrink-0 border-l border-[#c8c6c4] text-[11px] text-[#252423]">
      <div className="flex h-[38px] items-center justify-between pr-2.5 pl-2">
        <h2 className="text-[15px] font-semibold">Visualizations</h2>
        <button type="button" aria-label="Collapse visualizations"><Chevrons /></button>
      </div>
      <h3 className="pl-2 leading-4 font-semibold">Build visual</h3>
      <div className="relative mt-[3px] flex h-[45px] items-start gap-[38px] border-b border-[#c8c6c4] pl-2">
        <button type="button" aria-label="Build visual" className="flex size-8 items-center justify-center rounded-xs bg-white">
          <Svg w={24}>
            <path d="M0 .5h19" />
            <path d="M.5 5.500h23v7h-23zM.5 16.500h23v7h-23z" fill="#117865" stroke="#252423" strokeDasharray="2 1.5" />
          </Svg>
        </button>
        <button type="button" aria-label="Format visual" className="pt-1">
          <Svg w={24}>
            <path d="M8 23.500H.5V.5h10l7 7v2M10.500.5v7h7" stroke="#605e5c" strokeWidth="1.2" />
            <path d="M23.500 9c-1-.8-2.500.2-9 7l2.500 2.500c6-6.500 7.500-8.500 6.500-9.500zM14 16.500c-3-.5-4 2-4.500 4-.5 1.500-1.500 2.500-3 3 4.500 1 9.500 0 10-4.500z" stroke="#605e5c" strokeWidth="1.2" fill="#f4f4f4" />
          </Svg>
        </button>
        <Svg w={16} h={8} className="absolute bottom-[-1px] left-4">
          <path d="M0 8h16" stroke="#f4f4f4" strokeWidth="2" />
          <path d="m0 7.500 8-7 8 7" stroke="#c8c6c4" fill="#f4f4f4" />
        </Svg>
      </div>
      <div className="grid grid-cols-[repeat(6,18px)] gap-2.5 border-b border-[#d1d1d1] px-[11px] pt-[11px] pb-[9px]">
        {visuals.map((v) => (
          <button key={v.name} type="button" aria-label={v.name} className="size-[18px]">
            <Svg w={18}>{v.art}</Svg>
          </button>
        ))}
      </div>
      <h3 className="pt-2 pl-3 leading-[18px]">Values</h3>
      <div className="mt-1 mr-1.5 ml-1 flex h-7 items-center border border-dashed border-[#c8c6c4] pt-0.5 pl-2.5">Add data fields here</div>
      <h3 className="pt-[11px] pb-1 pl-3 leading-4 font-semibold">Drill through</h3>
      <Toggle label="Cross-report" />
      <Toggle label="Keep all filters" on />
      <div className="mt-1 mr-1.5 ml-1 flex h-[26px] items-center border border-dashed border-[#c8c6c4] bg-white pt-px pl-2">Add drill-through fields here</div>
    </aside>
  );
}

/* ---------- data pane ---------- */

function TableRow({ name, open }: { name: string; open?: boolean }) {
  return (
    <li>
      <button type="button" aria-expanded={!!open} className="flex h-6 w-full items-center pl-4 text-left">
        <Svg w={8}>
          <path d={open ? "M0 2l4 4 4-4" : "M2 0l4 4-4 4"} stroke="#605e5c" />
        </Svg>
        <Svg w={12} className="ml-[5px]">
          <rect x=".6" y=".6" width="10.8" height="10.8" rx="2" strokeWidth="1.2" />
          <path d="M4.200.5v11M7.800.5v11M.5 4.200h11M.5 7.800h11" strokeWidth="1.1" />
        </Svg>
        <span className="ml-1.5 whitespace-nowrap">{name}</span>
      </button>
    </li>
  );
}

function FieldRow({ name, sum }: { name: string; sum?: boolean }) {
  return (
    <li>
      <label className="flex h-6 items-center pl-11">
        <input type="checkbox" className="size-3 shrink-0 appearance-none rounded-xs border border-[#484644] checked:bg-[#117865]" />
        <span className="flex w-[26px] shrink-0 pl-2">
          {sum && <Svg w={12}><path d="M11 2V.6H1L6 6l-5 5.400h10V10" strokeWidth="1.2" /></Svg>}
        </span>
        <span className="whitespace-nowrap">{name}</span>
      </label>
    </li>
  );
}

function DataPane() {
  return (
    <aside aria-label="Data" className="w-[181px] shrink-0 border-l border-[#c8c6c4] text-[11px] text-[#3b3a39]">
      <div className="flex h-[38px] items-center justify-between pr-2.5 pl-2">
        <h2 className="text-[15px] font-semibold text-[#252423]">Data</h2>
        <button type="button" aria-label="Collapse data"><Chevrons /></button>
      </div>
      <label className="mx-1 mt-[7px] flex h-6 items-center rounded border border-[#c8c6c4] border-b-[#605e5c] bg-white pl-3">
        <Svg w={14}>
          <circle cx="6" cy="6" r="5.3" stroke="#605e5c" />
          <path d="m10 10 4 4" stroke="#605e5c" />
        </Svg>
        <input type="search" aria-label="Search data" placeholder="Search" className="ml-[7px] min-w-0 flex-1 bg-transparent text-[13px] outline-none placeholder:text-[#605e5c]" />
      </label>
      <ul className="mt-2.5">
        <TableRow name="kpi_summary_powerbi" />
        <TableRow name="master_data_powerbi" />
        <TableRow name="seasonality_insights_p..." open />
        <FieldRow name="Period_Name" />
        <FieldRow name="Period_Number" sum />
        <FieldRow name="Sales" sum />
        <FieldRow name="Seasonality_Type" />
        <TableRow name="store_summary_power..." />
      </ul>
    </aside>
  );
}

/* ---------- status bar ---------- */

function StatusBar() {
  return (
    <footer className="flex h-[22px] shrink-0 items-center border-t border-[#c8c6c4] pt-1 pl-1 text-[11px] text-[#3b3a39]">
      <span>Page 2 of 3</span>
      <button type="button" aria-label="Zoom out" className="ml-auto">
        <Svg w={5} h={8}><path d="M0 4h5" strokeWidth="2" /></Svg>
      </button>
      <span className="relative ml-1 flex items-center">
        <input
          type="range"
          aria-label="Zoom"
          min={0}
          max={200}
          defaultValue={90}
          className="h-3 w-[100px] appearance-none bg-[linear-gradient(#484644,#484644)] bg-[length:100%_1px] bg-center bg-no-repeat [&::-webkit-slider-thumb]:h-[11px] [&::-webkit-slider-thumb]:w-1 [&::-webkit-slider-thumb]:appearance-none [&::-webkit-slider-thumb]:bg-[#3b3a39]"
        />
        <span className="absolute left-1/2 h-[5px] w-px bg-[#3b3a39]" />
      </span>
      <button type="button" aria-label="Zoom in" className="ml-1.5">
        <Svg w={8}><path d="M4 0v8M0 4h8" strokeWidth="1.2" /></Svg>
      </button>
      <span className="ml-[13px] w-6">90%</span>
      <button type="button" aria-label="Fit to page" className="mr-[19px] ml-[19px]">
        <Svg w={14} h={10}>
          <rect x=".6" y=".6" width="12.8" height="8.8" rx="1" strokeWidth="1.2" />
          <path d="M5 3H3v4h2M9 3h2v4H9" />
        </Svg>
      </button>
    </footer>
  );
}

export default function App() {
  return (
    <div className="flex h-screen min-h-[640px] flex-col overflow-hidden bg-[#f4f4f4] font-['Open_Sans','Noto_Sans',sans-serif]">
      <TitleBar />
      <MenuBar />
      <Ribbon />
      <div className="flex min-h-0 flex-1">
        <Rail />
        <main className="flex min-w-0 flex-1 flex-col">
          <InfoBar />
          <div className="flex min-h-0 flex-1">
            <Canvas />
            <FilterPane />
          </div>
          <PageTabs />
        </main>
        <VisualizationsPane />
        <DataPane />
      </div>
      <StatusBar />
    </div>
  );
}
